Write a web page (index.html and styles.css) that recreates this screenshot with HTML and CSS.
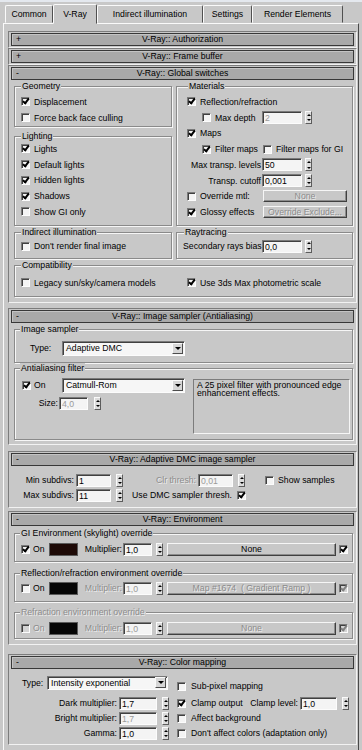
FILE: index.html
```html
<!DOCTYPE html>
<html lang="en">
<head>
    <meta charset="UTF-8">
    <meta name="viewport" content="width=device-width, initial-scale=1.0">
    <title>Render Setup - V-Ray</title>
    <link rel="stylesheet" href="styles.css">
</head>
<body>
    <div class="tabs">
        <div class="tab t-common">Common</div>
        <div class="tab t-vray active">V-Ray</div>
        <div class="tab t-ind">Indirect illumination</div>
        <div class="tab t-set">Settings</div>
        <div class="tab t-re">Render Elements</div>
    </div>

    <div class="panel">
        <div class="rollout">
            <div class="rhead"><span class="pm">+</span><span>V-Ray:: Authorization</span></div>
        </div>
        <div class="rollout">
            <div class="rhead"><span class="pm">+</span><span>V-Ray:: Frame buffer</span></div>
        </div>

        <!-- Global switches -->
        <div class="rollout r-gs">
            <div class="rhead"><span class="pm">-</span><span>V-Ray:: Global switches</span></div>
            <div class="rbody">
                <div class="cols">
                    <div class="col-l">
                        <div class="grp g-geom">
                            <div class="gt">Geometry</div>
                            <div class="row"><span class="cb on"></span>Displacement</div>
                            <div class="row"><span class="cb"></span>Force back face culling</div>
                        </div>
                        <div class="grp g-light">
                            <div class="gt">Lighting</div>
                            <div class="row"><span class="cb on"></span>Lights</div>
                            <div class="row"><span class="cb on"></span>Default lights</div>
                            <div class="row"><span class="cb on"></span>Hidden lights</div>
                            <div class="row"><span class="cb on"></span>Shadows</div>
                            <div class="row"><span class="cb"></span>Show GI only</div>
                        </div>
                    </div>
                    <div class="grp g-mat">
                        <div class="gt">Materials</div>
                        <div class="row"><span class="cb on"></span>Reflection/refraction</div>
                        <div class="row"><span class="mlab sub"><span class="cb"></span>Max depth</span><span class="num dis">2</span><span class="spin"></span></div>
                        <div class="row"><span class="cb on"></span>Maps</div>
                        <div class="row"><span class="mlab sub"><span class="cb on"></span>Filter maps</span><span class="cb gi"></span>Filter maps for GI</div>
                        <div class="row"><span class="mlab r">Max transp. levels</span><span class="num">50</span><span class="spin"></span></div>
                        <div class="row"><span class="mlab r">Transp. cutoff</span><span class="num">0,001</span><span class="spin"></span></div>
                        <div class="row"><span class="mlab"><span class="cb"></span>Override mtl:</span><span class="btn dis w84">None</span></div>
                        <div class="row"><span class="mlab"><span class="cb on"></span>Glossy effects</span><span class="btn dis w84">Override Exclude...</span></div>
                    </div>
                </div>
                <div class="cols">
                    <div class="grp g-ind">
                        <div class="gt">Indirect illumination</div>
                        <div class="row"><span class="cb"></span>Don't render final image</div>
                    </div>
                    <div class="grp g-ray">
                        <div class="gt">Raytracing</div>
                        <div class="row"><span class="rlab">Secondary rays bias</span><span class="num">0,0</span><span class="spin"></span></div>
                    </div>
                </div>
                <div class="grp g-compat">
                    <div class="gt">Compatibility</div>
                    <div class="row"><span class="half"><span class="cb"></span>Legacy sun/sky/camera models</span><span class="cb on"></span>Use 3ds Max photometric scale</div>
                </div>
            </div>
        </div>

        <!-- Image sampler -->
        <div class="rollout r-is">
            <div class="rhead"><span class="pm">-</span><span>V-Ray:: Image sampler (Antialiasing)</span></div>
            <div class="rbody">
                <div class="grp g-is">
                    <div class="gt">Image sampler</div>
                    <div class="line"><span class="tlab">Type:</span><div class="dd">Adaptive DMC<span class="dd-btn"></span></div></div>
                </div>
                <div class="grp g-aa">
                    <div class="gt">Antialiasing filter</div>
                    <div class="aa">
                        <div class="aa-l">
                            <div class="line"><span class="onlab"><span class="cb on"></span>On</span><div class="dd">Catmull-Rom<span class="dd-btn"></span></div></div>
                            <div class="line size"><span class="szlab">Size:</span><span class="num w29 dis">4,0</span><span class="spin"></span></div>
                        </div>
                        <div class="desc">A 25 pixel filter with pronounced edge enhancement effects.</div>
                    </div>
                </div>
            </div>
        </div>

        <!-- Adaptive DMC -->
        <div class="rollout r-dmc">
            <div class="rhead"><span class="pm">-</span><span>V-Ray:: Adaptive DMC image sampler</span></div>
            <div class="rbody">
                <div class="line">
                    <span class="dlab">Min subdivs:</span><span class="num w35">1</span><span class="spin"></span>
                    <span class="dlab2 dis">Clr thresh:</span><span class="num w35 dis">0,01</span><span class="spin"></span>
                    <span class="cb show"></span>Show samples
                </div>
                <div class="line">
                    <span class="dlab">Max subdivs:</span><span class="num w35">11</span><span class="spin"></span>
                    <span class="dlab3">Use DMC sampler thresh.</span><span class="cb on"></span>
                </div>
            </div>
        </div>

        <!-- Environment -->
        <div class="rollout r-env">
            <div class="rhead"><span class="pm">-</span><span>V-Ray:: Environment</span></div>
            <div class="rbody">
                <div class="grp g-gi">
                    <div class="gt">GI Environment (skylight) override</div>
                    <div class="line env">
                        <span class="cb on"></span><span class="onl">On</span><span class="sw brown"></span>
                        <span class="mul">Multiplier:</span><span class="num w29">1,0</span><span class="spin"></span>
                        <span class="btn map">None</span><span class="cb on last"></span>
                    </div>
                </div>
                <div class="grp g-refl">
                    <div class="gt">Reflection/refraction environment override</div>
                    <div class="line env">
                        <span class="cb"></span><span class="onl">On</span><span class="sw"></span>
                        <span class="mul dis">Multiplier:</span><span class="num w29 dis">1,0</span><span class="spin"></span>
                        <span class="btn map dis">Map #1674  ( Gradient Ramp )</span><span class="cb on off last"></span>
                    </div>
                </div>
                <div class="grp g-refr">
                    <div class="gt dis">Refraction environment override</div>
                    <div class="line env">
                        <span class="cb off"></span><span class="onl dis">On</span><span class="sw"></span>
                        <span class="mul dis">Multiplier:</span><span class="num w29 dis">1,0</span><span class="spin"></span>
                        <span class="btn map dis">None</span><span class="cb on off last"></span>
                    </div>
                </div>
            </div>
        </div>

        <!-- Color mapping -->
        <div class="rollout r-cm">
            <div class="rhead"><span class="pm">-</span><span>V-Ray:: Color mapping</span></div>
            <div class="rbody">
                <div class="cm-grid">
                    <div class="cm-type"><span class="cm-tl">Type:</span><div class="dd w121">Intensity exponential<span class="dd-btn"></span></div></div>
                    <div class="cm-chk first"><span class="cb"></span>Sub-pixel mapping</div>

                    <div class="cm-l"><span class="clab">Dark multiplier:</span><span class="num w38">1,7</span><span class="spin"></span></div>
                    <div class="cm-chk"><span class="cb on"></span>Clamp output<span class="grow"></span><span class="cl">Clamp level:</span><span class="num w37">1,0</span><span class="spin"></span></div>

                    <div class="cm-l"><span class="clab">Bright multiplier:</span><span class="num w38 dis">1,7</span><span class="spin"></span></div>
                    <div class="cm-chk"><span class="cb"></span>Affect background</div>

                    <div class="cm-l"><span class="clab">Gamma:</span><span class="num w38">1,0</span><span class="spin"></span></div>
                    <div class="cm-chk"><span class="cb"></span>Don't affect colors (adaptation only)</div>
                </div>
            </div>
        </div>
    </div>
</body>
</html>
```

FILE: styles.css
```css
* {
    margin: 0;
    padding: 0;
    box-sizing: border-box;
}

body {
    width: 362px;
    height: 750px;
    overflow: hidden;
    background: #c8c8c8;
    border-top: 2px solid #e4e8ee;
    font-family: "Liberation Sans", Arial, sans-serif;
    font-size: 8.7px;
    color: #000;
}

/* ---------- tabs ---------- */
.tabs {
    display: flex;
    align-items: flex-end;
    height: 21px;
    padding-left: 5px;
}

.tab {
    height: 18px;
    line-height: 16px;
    text-align: center;
    border: 1px solid;
    border-color: #fafafa #505050 transparent #fafafa;
    border-radius: 2px 2px 0 0;
}

.tab.active {
    height: 20px;
    line-height: 19px;
    margin-bottom: -1px;
    position: relative;
    z-index: 1;
    background: #c8c8c8;
}

.t-common { width: 48px; }
.t-vray { width: 44px; }
.t-ind { width: 106px; }
.t-set { width: 49px; }
.t-re { width: 91px; }

/* ---------- panel / rollouts ---------- */
.panel {
    margin-left: 3px;
    width: 356px;
    height: 727px;
    border-top: 1px solid #fafafa;
    border-left: 1px solid #fafafa;
    border-right: 1px solid #4a4a4a;
    padding: 7px 1px 0 4px;
}

.rollout {
    border: 1px solid;
    border-color: #7c7c7c #f2f2f2 #f2f2f2 #7c7c7c;
    padding: 1px 2px;
}

.rhead {
    display: grid;
    grid-template-columns: 14px 1fr 14px;
    height: 13px;
    line-height: 11px;
    text-align: center;
    background: #a9a9a9;
    border: 1px solid #383838;
    box-shadow: inset 1px 1px 0 #c4c4c4;
}

.pm {
    text-align: left;
    padding-left: 4px;
}

.rbody {
    padding: 0 1px 0 3px;
}

.r-gs { margin-bottom: 5px; }
.r-gs .rbody { padding-bottom: 4px; }

.r-is { margin-bottom: 6px; }
.r-is .rbody { padding-bottom: 3px; }

.r-dmc { margin-bottom: 3px; }
.r-dmc .rbody { padding-top: 7px; padding-bottom: 3px; }

.r-env { margin-bottom: 9px; }
.r-env .rbody { padding-bottom: 4px; }

.r-cm .rbody { padding-top: 7px; padding-bottom: 2px; }

/* ---------- group boxes ---------- */
.grp {
    border: 1px solid #8a8a8a;
    box-shadow: 1px 1px 0 #f6f6f6, inset 1px 1px 0 #f6f6f6;
}

/* title sits on the top border; its bottom margin is the group's top padding */
.gt {
    display: table;
    margin: -6px 0 var(--pt, 0) 5px;
    padding: 0 1px;
    line-height: 10px;
    background: #c8c8c8;
}

.cols {
    display: flex;
    gap: 4px;
}

.col-l {
    width: 158px;
    flex: none;
}

.g-geom { --pt: 3px; margin-top: 6px; padding: 0 0 0 6px; }
.g-light { --pt: 0.5px; margin-top: 9px; padding: 0 0 5.5px 6px; }
.g-mat { --pt: 3px; flex: 1; margin-top: 6px; padding: 0 0 5px 10px; }
.g-mat .gt, .g-ray .gt { margin-left: 1px; }
.g-ind { --pt: 1px; width: 158px; flex: none; margin-top: 6px; padding: 0 0 4px 6px; }
.g-ray { --pt: 1px; flex: 1; margin-top: 6px; padding: 0 0 4px 6px; }
.g-compat { --pt: 5px; margin-top: 6px; padding: 0 0 5px 6px; }
.g-compat .gt, .g-ind .gt, .g-geom .gt, .g-light .gt { margin-left: 0; }

.g-is { --pt: 7px; margin-top: 6px; padding: 0 0 6px 15px; }
.g-is .gt { margin-left: -10px; }
.g-aa { --pt: 5px; margin-top: 5px; padding: 0 0 5px 0; }

.g-gi { --pt: 4px; margin-top: 7px; padding: 0 0 4px 6px; }
.g-refl { --pt: 3px; margin-top: 11px; padding: 0 0 5px 6px; }
.g-refr { --pt: 4px; margin-top: 10px; padding: 0 0 2px 6px; }
.g-gi .gt, .g-refl .gt, .g-refr .gt { margin-left: -1px; }

/* ---------- rows ---------- */
.row {
    display: flex;
    align-items: center;
    height: 15.75px;
    white-space: nowrap;
}

.line {
    display: flex;
    align-items: center;
    height: 15px;
    white-space: nowrap;
}

.mlab {
    display: flex;
    align-items: center;
    width: 75px;
    flex: none;
}

.mlab.sub { padding-left: 15px; }
.mlab.r { justify-content: flex-end; padding-right: 1px; }

.rlab {
    width: 79px;
    text-align: right;
    padding-right: 1px;
}

.half {
    display: flex;
    align-items: center;
    width: 166px;
}

.cb.gi { margin-left: 1px; }

/* ---------- controls ---------- */
.cb {
    position: relative;
    flex: none;
    width: 9px;
    height: 9px;
    margin-right: 4px;
    background: #f4f4f4;
    border: 1px solid;
    border-color: #7a7a7a #fcfcfc #fcfcfc #7a7a7a;
    box-shadow: inset 1px 1px 0 #404040;
}

.cb.on::after {
    content: "";
    position: absolute;
    left: 2px;
    top: -1px;
    width: 2px;
    height: 5px;
    border: solid #000;
    border-width: 0 2px 2px 0;
    transform: rotate(38deg);
}

.cb.off {
    background: #d4d4d4;
}

.cb.off::after {
    border-color: #808080;
}

.num {
    flex: none;
    width: 40px;
    height: 13px;
    line-height: 12px;
    padding-left: 2px;
    background: #f4f4f4;
    border: 1px solid;
    border-color: #7a7a7a #fcfcfc #fcfcfc #7a7a7a;
    box-shadow: inset 1px 1px 0 #404040;
}

.num.w29 { width: 29px; }
.num.w35 { width: 35px; }
.num.w37 { width: 37px; }
.num.w38 { width: 38px; }

.spin {
    flex: none;
    display: flex;
    flex-direction: column;
    justify-content: space-around;
    align-items: center;
    width: 7px;
    height: 13px;
    margin-left: 3px;
    background: #dcdcdc;
    border: 1px solid;
    border-color: #fafafa #5c5c5c #5c5c5c #fafafa;
}

.spin::before {
    content: "";
    border: 2px solid transparent;
    border-top: 0;
    border-bottom: 2px solid #000;
}

.spin::after {
    content: "";
    border: 2px solid transparent;
    border-bottom: 0;
    border-top: 2px solid #000;
}

.btn {
    flex: none;
    height: 13px;
    line-height: 11px;
    text-align: center;
    white-space: pre;
    border: 1px solid;
    border-color: #f6f6f6 #404040 #404040 #f6f6f6;
    box-shadow: inset -1px -1px 0 #8c8c8c;
}

.btn.w84 {
    width: 84px;
    height: 12px;
    line-height: 10px;
    margin-left: 1px;
}

.dis {
    color: #8c8c8c;
    text-shadow: 1px 1px 0 #ececec;
}

.num.dis { text-shadow: none; color: #9a9a9a; }

.dd {
    flex: none;
    display: flex;
    align-items: center;
    width: 123px;
    height: 15px;
    padding-left: 3px;
    background: #f6f6f6;
    border: 1px solid;
    border-color: #7a7a7a #fcfcfc #fcfcfc #7a7a7a;
    box-shadow: inset 1px 1px 0 #404040;
}

.dd.w121 { width: 121px; height: 14px; }

.dd-btn {
    display: flex;
    align-items: center;
    justify-content: center;
    width: 11px;
    height: 11px;
    margin-left: auto;
    margin-right: 1px;
    background: #d6d6d6;
    border: 1px solid;
    border-color: #fafafa #4c4c4c #4c4c4c #fafafa;
}

.dd-btn::after {
    content: "";
    border: 3px solid transparent;
    border-bottom: 0;
    border-top: 3px solid #000;
}

/* ---------- image sampler ---------- */
.tlab { width: 32px; }

.aa {
    display: flex;
}

.aa-l {
    flex: none;
    padding-left: 7px;
}

.onlab {
    display: flex;
    align-items: center;
    width: 40px;
}

.onlab .cb { margin-right: 3px; }

.size { margin-top: 3px; }

.szlab {
    width: 37px;
    text-align: right;
    padding-right: 1px;
}

.size .spin { margin-left: 6px; }

.desc {
    width: 157px;
    height: 55px;
    margin: 1px 0 0 8px;
    padding: 1px 0 0 3px;
    line-height: 8.5px;
    border: 1px solid;
    border-color: #7c7c7c #f6f6f6 #f6f6f6 #7c7c7c;
}

/* ---------- adaptive dmc ---------- */
.dlab {
    width: 62px;
    text-align: right;
    padding-right: 2px;
}

.r-dmc .spin { margin-left: 5px; }

.dlab2 {
    width: 75px;
    text-align: right;
    padding-right: 2px;
}

.cb.show { margin-left: 20px; }

.dlab3 {
    width: 110px;
    text-align: right;
    padding-right: 1px;
}

.dlab3 + .cb { margin-left: 4px; }

/* ---------- environment ---------- */
.env .cb { margin-right: 3px; }

.onl { width: 16px; }

.sw {
    flex: none;
    width: 29px;
    height: 13px;
    background: #050505;
    border: 1px solid #5a5a5a;
}

.sw.brown { background: #1e0a07; }

.mul {
    width: 44px;
    text-align: right;
}

.env .num { margin-left: 1px; }
.env .spin { margin-left: 4px; }

.btn.map {
    width: 169px;
    margin-left: 4px;
}

.cb.last { margin: 0 0 0 3px; }

/* ---------- color mapping ---------- */
.cm-grid {
    display: grid;
    grid-template-columns: 163px 1fr;
    grid-template-rows: 20px 15px 15px 15px;
}

.cm-type {
    display: flex;
    align-items: flex-start;
    padding-left: 8px;
}

.cm-tl {
    width: 25px;
    line-height: 14px;
}

.cm-chk {
    display: flex;
    align-items: center;
    height: 15px;
    white-space: nowrap;
}

.cm-chk.first {
    align-self: end;
    margin-bottom: 2px;
}

.cm-chk .cb { margin-right: 5px; }

.cm-l {
    display: flex;
    align-items: center;
}

.clab {
    width: 104px;
    text-align: right;
    padding-right: 1px;
}

.cm-l .num { margin-left: 1px; }
.cm-l .spin, .cm-chk .spin { margin-left: 5px; }
.cm-chk .spin { margin-right: 4px; }

.grow { flex: 1; }

.cl { margin-right: 2px; }
```
